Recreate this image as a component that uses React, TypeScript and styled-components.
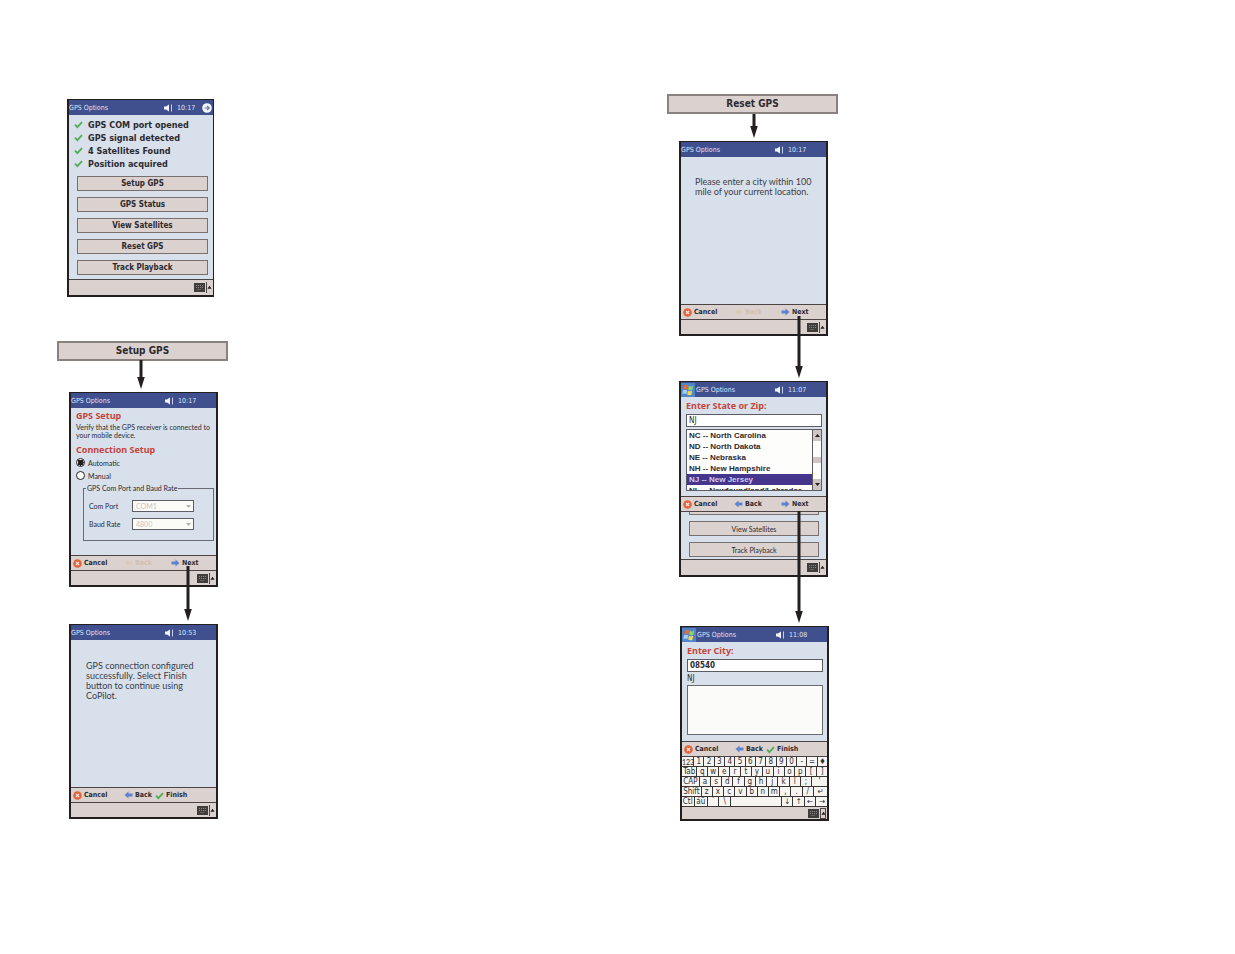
import React from "react";
import styled, { createGlobalStyle, css } from "styled-components";

const ink = "#231f20";
const panel = "#dbd2cf";
const sky = "#d8e0eb";
const narrow = `Lato, "Liberation Sans", sans-serif`;
const listFont = `"Liberation Sans", sans-serif`;
const medium = `"Noto Sans", sans-serif`;

const Global = createGlobalStyle`
  * { box-sizing: border-box; }
  body { margin: 0; background: #fff; color: #2c2a30; font-family: "DejaVu Sans Condensed", "Noto Sans", sans-serif; font-size: 8px; line-height: 10px; }
  button, input, select, textarea { font: inherit; color: inherit; margin: 0; padding: 0; border-radius: 0; }
  h2, h3, p, ul, fieldset { margin: 0; padding: 0; font-weight: normal; }
  svg { display: block; flex: none; }
`;

const Page = styled.main`
  display: grid;
  grid-template-columns: 1fr 1fr;
  column-gap: 42px;
  padding: 94px 0 133px 57px;
`;
const Flow = styled.section<{ $top?: number }>`
  display: flex;
  flex-direction: column;
  align-items: flex-start;
  padding-top: ${(p) => p.$top ?? 0}px;
`;
const FlowLabel = styled.h2`
  width: 171px;
  height: 20px;
  border: 2px solid #8a827e;
  background: ${panel};
  font-size: 10px;
  font-weight: bold;
  line-height: 16px;
  text-align: center;
`;
const Gap = styled.div<{ $h: number; $center: number }>`
  position: relative;
  height: ${(p) => p.$h}px;
  margin-left: ${(p) => p.$center}px;
`;
const ArrowBox = styled.div`
  position: absolute;
  bottom: 3px;
  left: -5px;
  z-index: 1;
`;
const Device = styled.article<{ $first?: boolean; $indent?: number }>`
  display: flex;
  flex-direction: column;
  width: ${(p) => (p.$first ? 147 : 149)}px;
  min-height: ${(p) => (p.$first ? 198 : 195)}px;
  margin-left: ${(p) => p.$indent ?? 12}px;
  border: 2px solid ${ink};
  border-top-width: 1px;
  ${(p) => p.$first && css`border-right-width: 1px; margin-bottom: 44px;`}
  background: ${sky};
`;
const TitleBar = styled.header`
  display: flex;
  align-items: center;
  height: 15px;
  padding-right: 1px;
  background: #40508f;
  color: #dfe4f4;
  font-size: 7px;
`;
const TitleText = styled.h3`
  flex: 1;
  font-size: 7px;
`;
const Clock = styled.time`
  width: 21px;
  margin-left: 4px;
`;
const Corner = styled.span<{ $slim?: boolean }>`
  display: flex;
  justify-content: flex-end;
  width: ${(p) => (p.$slim ? 14 : 16)}px;
`;
const Body = styled.div<{ $pad?: string }>`
  flex: 1;
  padding: ${(p) => p.$pad ?? "3px 5px 0"};
`;
const CheckRow = styled.li`
  display: flex;
  align-items: center;
  gap: 5px;
  height: 13px;
  font-size: 9px;
  font-weight: bold;
`;
const CheckList = styled.ul`
  list-style: none;
`;
const Buttons = styled.div`
  display: flex;
  flex-direction: column;
  gap: 6px;
  padding: 6px 0 0 3px;
`;
const MenuButton = styled.button<{ $light?: boolean }>`
  height: 15px;
  border: 1px solid #77706f;
  background: ${panel};
  font-size: 8px;
  font-weight: bold;
  line-height: 12px;
  ${(p) => p.$light && css`font-family: ${narrow}; font-size: 7px; font-weight: normal;`}
`;
const Red = styled.h3`
  color: #c5453c;
  font-family: ${medium};
  font-size: 9px;
  line-height: 12px;
  font-weight: bold;
`;
const Small = styled.p`
  font-family: ${narrow};
  font-size: 7px;
  line-height: 8px;
  margin: 1px 0 5px;
  white-space: nowrap;
`;
const Message = styled.p`
  font-family: ${narrow};
  font-size: 9px;
  line-height: 10px;
  white-space: nowrap;
  color: #3b3d47;
`;
const RadioRow = styled.label`
  display: flex;
  align-items: center;
  gap: 3px;
  height: 13px;
  font-family: ${narrow};
  font-size: 7px;
`;
const Radio = styled.input`
  appearance: none;
  width: 9px;
  height: 9px;
  border: 1px solid ${ink};
  border-radius: 50%;
  background: #fff;
  &:checked { background: radial-gradient(circle, ${ink} 0 3px, #fff 3px); }
`;
const Group = styled.fieldset`
  margin: 2px 0 0 7px;
  padding: 8px 19px 10px 5px;
  border: 1px solid #6a6a72;
  font-family: ${narrow};
  font-size: 7px;
`;
const Legend = styled.legend`
  margin-left: -3px;
  padding: 0 1px;
  line-height: 8px;
`;
const Field = styled.div`
  display: flex;
  align-items: center;
  justify-content: space-between;
  height: 12px;
  & + & { margin-top: 6px; }
`;
const SelectWrap = styled.span`
  position: relative;
  svg { position: absolute; right: 3px; top: 5px; }
`;
const Select = styled.select`
  display: block;
  appearance: none;
  width: 62px;
  height: 12px;
  padding-left: 3px;
  border: 1px solid #5e5e64;
  background: #fbfbf8;
  color: #cfc4bc;
  font-size: 7px;
  line-height: 8px;
  opacity: 1;
`;
const Toolbar = styled.nav`
  display: grid;
  grid-template-columns: 51px 47px 1fr;
  align-items: center;
  height: 16px;
  padding-left: 2px;
  border: solid #4a4444;
  border-width: 1px 0;
  background: ${panel};
`;
const ToolbarFinish = styled(Toolbar)`
  grid-template-columns: 51px 31px 1fr;
`;
const Tool = styled.button`
  display: flex;
  align-items: center;
  gap: 2px;
  border: 0;
  background: none;
  font-size: 7px;
  font-weight: bold;
  line-height: 10px;
  &:disabled { color: #d0bfb2; }
`;
const Tray = styled.footer<{ $line?: boolean; $boxed?: boolean }>`
  display: flex;
  align-items: center;
  justify-content: flex-end;
  height: ${(p) => (p.$line ? 16 : p.$boxed ? 12 : 14)}px;
  ${(p) => p.$line && css`border-top: 1px solid #4a4444;`}
  background: ${panel};
`;
const TrayKey = styled.button`
  display: flex;
  height: 11px;
  border: 0;
  background: none;
`;
const Input = styled.input<{ $strong?: boolean }>`
  display: block;
  width: 136px;
  height: 13px;
  margin-top: 2px;
  padding-left: 2px;
  border: 1px solid #5c5c62;
  background: #fff;
  font-size: 8px;
  font-weight: ${(p) => (p.$strong ? "bold" : "normal")};
`;
const ListFrame = styled.div`
  display: flex;
  width: 136px;
  height: 62px;
  margin-top: 2px;
  border: 1px solid #5c5c62;
  background: #fdfdfb;
`;
const List = styled.ul`
  flex: 1;
  overflow: hidden;
  list-style: none;
  font-family: ${listFont};
  font-size: 8px;
  font-weight: bold;
`;
const Item = styled.li<{ $on?: boolean }>`
  height: 11px;
  padding-left: 2px;
  line-height: 11px;
  white-space: nowrap;
  ${(p) => p.$on && css`background: #45358c; color: #cfcbec;`}
`;
const Scroll = styled.div`
  display: flex;
  flex-direction: column;
  justify-content: space-between;
  width: 9px;
  border-left: 1px solid #5c5c62;
`;
const ScrollPart = styled.button<{ $h: number }>`
  display: flex;
  align-items: center;
  justify-content: center;
  height: ${(p) => p.$h}px;
  border: 0;
  background: #cfc6c2;
`;
const Area = styled.textarea`
  display: block;
  width: 136px;
  height: 50px;
  border: 1px solid #6a6a70;
  background: #fbfcfa;
  resize: none;
`;
const StateNote = styled.p`
  height: 13px;
  padding-top: 2px;
`;
const Behind = styled.div`
  display: flex;
  flex-direction: column;
  gap: 6px;
  padding: 0 7px 2px 8px;
`;
const CutButton = styled.div`
  height: 3px;
  border: 1px solid #77706f;
  border-top: 0;
  background: ${panel};
`;
const Keyboard = styled.div`
  background: #3a3636;
`;
const KeyRow = styled.div`
  display: flex;
  gap: 1px;
  height: 10px;
  padding-bottom: 1px;
`;
const Key = styled.button<{ $w: number }>`
  flex: ${(p) => p.$w} 1 0;
  min-width: 0;
  border: 0;
  background: #f6f5f1;
  font-size: 8px;
  line-height: 8px;
  white-space: nowrap;
`;
const NumberKey = styled(Key)`
  font-family: ${narrow};
  font-size: 7px;
`;

function Arrow({ length }: { length: number }) {
  return (
    <ArrowBox>
      <svg width="10" height={length} aria-hidden="true">
        <path d={`M3.5 0H6.5V${length - 12}H8.8L5 ${length}L1.2 ${length - 12}H3.5Z`} fill={ink} />
      </svg>
    </ArrowBox>
  );
}
const Check = () => (
  <svg width="9" height="9" viewBox="0 0 9 9" aria-hidden="true">
    <path d="M1 4.6L3.4 7.2L8 2.2" fill="none" stroke="#4fae55" strokeWidth="1.8" />
  </svg>
);
const Cancel = () => (
  <svg width="9" height="9" viewBox="0 0 9 9" aria-hidden="true">
    <circle cx="4.5" cy="4.5" r="4.3" fill="#e2643c" />
    <path d="M3 3L6 6M6 3L3 6" stroke="#fbe3d8" strokeWidth="1.3" />
  </svg>
);
const Move = ({ left, faint }: { left?: boolean; faint?: boolean }) => (
  <svg width="9" height="8" viewBox="0 0 9 8" aria-hidden="true">
    <path
      d={left ? "M0.5 4L4.5 0.6V2.4H8.5V5.6H4.5V7.4Z" : "M8.5 4L4.5 0.6V2.4H0.5V5.6H4.5V7.4Z"}
      fill={faint ? "#dccab8" : "#5f83cf"}
    />
  </svg>
);
const Speaker = () => (
  <svg width="9" height="8" viewBox="0 0 9 8" aria-hidden="true">
    <path d="M0 2.6H2L5 0.4V7.6L2 5.4H0Z" fill="#f2f4fb" />
    <path d="M7.5 0.5V7.5" stroke="#c5cdea" />
  </svg>
);
const Flag = () => (
  <svg width="15" height="14" viewBox="0 0 15 14" aria-hidden="true">
    <rect width="14" height="14" fill="#4f86c8" />
    <path d="M3 2.5Q5 1 7 2.4L6.3 6.4Q4.4 5.2 2.2 6.4Z" fill="#ee6a3a" />
    <path d="M7.8 2.8Q10 4 12.2 2.8L11.4 6.8Q9.2 8 7.1 6.8Z" fill="#8fd06a" />
    <path d="M2 7.3Q4.2 6 6.1 7.3L5.4 11.2Q3.4 10 1.2 11.2Z" fill="#a5d0f5" />
    <path d="M6.9 7.7Q9 9 11.2 7.7L10.4 11.7Q8.2 12.8 6.2 11.6Z" fill="#f5d65c" />
  </svg>
);
const RoundArrow = () => (
  <svg width="10" height="10" viewBox="0 0 10 10" aria-hidden="true">
    <circle cx="5" cy="5" r="4.8" fill="#f4f5fa" />
    <path d="M2.4 5H7M5 2.8L7.2 5L5 7.2" fill="none" stroke="#6a74a5" strokeWidth="1.2" />
  </svg>
);
const Triangle = ({ down, color = ink }: { down?: boolean; color?: string }) => (
  <svg width="5" height="3" viewBox="0 0 5 3" aria-hidden="true">
    <path d={down ? "M0 0H5L2.5 3Z" : "M0 3H5L2.5 0Z"} fill={color} />
  </svg>
);
function TrayBar({ line, boxed }: { line?: boolean; boxed?: boolean }) {
  return (
    <Tray $line={line} $boxed={boxed}>
      <TrayKey aria-label="Input panel">
        <svg width="20" height="11" viewBox="0 0 20 11" aria-hidden="true">
          <rect x="1" y="1" width="11" height="9" fill="#423d3d" />
          <path d="M3 3.5H10M3 5.5H10M4.5 7.5H8.5" stroke="#8d8583" strokeDasharray="1 1" />
          {boxed ? (
            <rect x="13.5" y="0.5" width="5" height="10" fill="none" stroke="#4d4747" />
          ) : (
            <path d="M13.5 0V11" stroke="#4d4747" />
          )}
          <path d="M14.4 6.8H18.6L16.5 3.8Z" fill={ink} />
        </svg>
      </TrayKey>
    </Tray>
  );
}
function Title({ time, flag, corner }: { time: string; flag?: boolean; corner?: boolean }) {
  return (
    <TitleBar>
      {flag && <Flag />}
      <TitleText>GPS Options</TitleText>
      <Speaker />
      <Clock>{time}</Clock>
      <Corner $slim={corner}>{corner && <RoundArrow />}</Corner>
    </TitleBar>
  );
}
function WizardBar({ finish, noBack }: { finish?: boolean; noBack?: boolean }) {
  const Bar = finish ? ToolbarFinish : Toolbar;
  return (
    <Bar>
      <Tool><Cancel />Cancel</Tool>
      <Tool disabled={noBack}><Move left faint={noBack} />Back</Tool>
      {finish ? <Tool><Check />Finish</Tool> : <Tool><Move />Next</Tool>}
    </Bar>
  );
}

const keyRows: [string, number][][] = [
  [["123", 12], ..."1234567890-=".split("").map((k): [string, number] => [k, 10]), ["♦", 10]],
  [["Tab", 16], ..."qwertyuiop[]".split("").map((k): [string, number] => [k, 11])],
  [["CAP", 18], ..."asdfghjkl;".split("").map((k): [string, number] => [k, 11]), ["'", 16]],
  [["Shift", 20], ..."zxcvbnm,./".split("").map((k): [string, number] => [k, 11]), ["↵", 14]],
  [["Ctl", 12], ["áü", 13], ["`", 11], ["\\", 11], [" ", 52], ["↓", 11], ["↑", 11], ["←", 11], ["→", 11]],
];
const states = [
  "NC -- North Carolina",
  "ND -- North Dakota",
  "NE -- Nebraska",
  "NH -- New Hampshire",
  "NJ -- New Jersey",
  "NL -- Newfoundland/Labrador",
];

export default function App() {
  return (
    <>
      <Global />
      <Page>
        <Flow $top={5}>
          <Device $first $indent={10}>
            <Title time="10:17" corner />
            <Body $pad="3px 5px 2px">
              <CheckList>
                {["GPS COM port opened", "GPS signal detected", "4 Satellites Found", "Position acquired"].map((t) => (
                  <CheckRow key={t}><Check />{t}</CheckRow>
                ))}
              </CheckList>
              <Buttons>
                {["Setup GPS", "GPS Status", "View Satellites", "Reset GPS", "Track Playback"].map((t) => (
                  <MenuButton key={t}>{t}</MenuButton>
                ))}
              </Buttons>
            </Body>
            <TrayBar line />
          </Device>

          <FlowLabel>Setup GPS</FlowLabel>
          <Gap $h={31} $center={84}><Arrow length={29} /></Gap>
          <Device>
            <Title time="10:17" />
            <Body $pad="2px 2px 0 5px">
              <Red>GPS Setup</Red>
              <Small>Verify that the GPS receiver is connected to<br />your mobile device.</Small>
              <Red>Connection Setup</Red>
              <RadioRow><Radio type="radio" name="mode" defaultChecked />Automatic</RadioRow>
              <RadioRow><Radio type="radio" name="mode" />Manual</RadioRow>
              <Group>
                <Legend>GPS Com Port and Baud Rate</Legend>
                <Field>
                  <label htmlFor="com">Com Port</label>
                  <SelectWrap><Select id="com" disabled><option>COM1</option></Select><Triangle down color="#b5aeb0" /></SelectWrap>
                </Field>
                <Field>
                  <label htmlFor="baud">Baud Rate</label>
                  <SelectWrap><Select id="baud" disabled><option>4800</option></Select><Triangle down color="#b5aeb0" /></SelectWrap>
                </Field>
              </Group>
            </Body>
            <WizardBar noBack />
            <TrayBar />
          </Device>
          <Gap $h={37} $center={131}><Arrow length={55} /></Gap>
          <Device>
            <Title time="10:53" />
            <Body $pad="21px 10px 0 15px">
              <Message>GPS connection configured<br />successfully. Select Finish<br />button to continue using<br />CoPilot.</Message>
            </Body>
            <WizardBar finish />
            <TrayBar />
          </Device>
        </Flow>

        <Flow>
          <FlowLabel>Reset GPS</FlowLabel>
          <Gap $h={27} $center={87}><Arrow length={24} /></Gap>
          <Device>
            <Title time="10:17" />
            <Body $pad="20px 10px 0 14px">
              <Message>Please enter a city within 100<br />mile of your current location.</Message>
            </Body>
            <WizardBar noBack />
            <TrayBar />
          </Device>
          <Gap $h={45} $center={132}><Arrow length={62} /></Gap>
          <Device>
            <Title time="11:07" flag />
            <Body $pad="3px 5px 5px">
              <Red as="label" htmlFor="state">Enter State or Zip:</Red>
              <Input id="state" defaultValue="NJ" />
              <ListFrame>
                <List role="listbox" aria-label="States">
                  {states.map((s) => (
                    <Item key={s} role="option" aria-selected={s.startsWith("NJ")} $on={s.startsWith("NJ")}>{s}</Item>
                  ))}
                </List>
                <Scroll>
                  <ScrollPart $h={11} aria-label="Up"><Triangle /></ScrollPart>
                  <ScrollPart $h={6} aria-label="Position" />
                  <ScrollPart $h={11} aria-label="Down"><Triangle down /></ScrollPart>
                </Scroll>
              </ListFrame>
            </Body>
            <WizardBar />
            <Behind>
              <CutButton />
              <MenuButton $light>View Satellites</MenuButton>
              <MenuButton $light>Track Playback</MenuButton>
            </Behind>
            <TrayBar line />
          </Device>
          <Gap $h={49} $center={132}><Arrow length={112} /></Gap>
          <Device $indent={13}>
            <Title time="11:08" flag />
            <Body $pad="3px 5px 5px">
              <Red as="label" htmlFor="city">Enter City:</Red>
              <Input id="city" defaultValue="08540" $strong />
              <StateNote>NJ</StateNote>
              <Area aria-label="Cities" />
            </Body>
            <WizardBar finish />
            <Keyboard>
              {keyRows.map((row, i) => (
                <KeyRow key={i}>
                  {row.map(([k, w]) =>
                    k === "123" ? <NumberKey key={k} $w={w}>{k}</NumberKey> : <Key key={k} $w={w}>{k}</Key>
                  )}
                </KeyRow>
              ))}
            </Keyboard>
            <TrayBar boxed />
          </Device>
        </Flow>
      </Page>
    </>
  );
}
